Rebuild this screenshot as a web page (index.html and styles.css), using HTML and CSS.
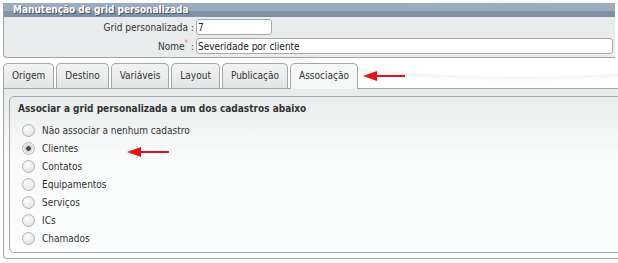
FILE: index.html
```html
<!DOCTYPE html>
<html lang="pt-BR">
<head>
  <meta charset="UTF-8" />
  <title>Manutenção de grid personalizada</title>
  <link rel="stylesheet" href="styles.css">
</head>
<body>
  <div class="panel">
    <div class="panel-title">Manutenção de grid personalizada</div>
    <div class="form">
      <div class="row">
        <label>Grid personalizada :</label>
        <input type="text" class="short" value="7" />
      </div>
      <div class="row">
        <label>Nome<span class="req">*</span> :</label>
        <input type="text" class="long" value="Severidade por cliente" />
      </div>
    </div>
  </div>

  <div class="tabs-area">
    <div class="tabs">
      <div class="tab">Origem</div>
      <div class="tab">Destino</div>
      <div class="tab">Variáveis</div>
      <div class="tab">Layout</div>
      <div class="tab">Publicação</div>
      <div class="tab active">Associação</div>
      <span class="arrow arrow-tab"></span>
    </div>
    <div class="tab-body">
      <div class="group">
        <div class="group-title">Associar a grid personalizada a um dos cadastros abaixo</div>
        <ul class="options">
          <li><span class="radio"></span>Não associar a nenhum cadastro</li>
          <li><span class="radio checked"></span>Clientes<span class="arrow arrow-opt"></span></li>
          <li><span class="radio"></span>Contatos</li>
          <li><span class="radio"></span>Equipamentos</li>
          <li><span class="radio"></span>Serviços</li>
          <li><span class="radio"></span>ICs</li>
          <li><span class="radio"></span>Chamados</li>
        </ul>
      </div>
    </div>
  </div>
</body>
</html>
```

FILE: styles.css
```css
body {
  margin: 0;
  padding: 3px 0 0 3px;
  width: 615px;
  height: 260px;
  overflow: hidden;
  background: #fff radial-gradient(ellipse 420px 60px at 520px 40px, #fff 60%, #f4f4f4 62%, #fff 70%);
  font-family: "DejaVu Sans Condensed", "DejaVu Sans", Verdana, sans-serif;
  font-stretch: condensed;
  font-size: 10px;
  color: #333;
}
.panel {
  width: 611px;
  border-left: 1px solid #a3a3a3;
  border-bottom: 1px solid #a3a3a3;
  border-bottom-left-radius: 4px;
  background: #e9ecec;
}
.panel-title {
  height: 14px;
  line-height: 14px;
  padding-left: 9px;
  background: linear-gradient(#9cadbd 0, #9aabbb 57%, #8293a8 58%, #7f90a4 100%);
  color: #fff;
  font-weight: bold;
  text-shadow: 1px 1px 0 #46566b;
}
.form {
  padding: 2px 0 3px;
}
.row {
  display: flex;
  align-items: center;
  margin-bottom: 3px;
}
.row:last-child {
  margin-bottom: 0;
}
.row label {
  width: 190px;
  text-align: right;
  margin-right: 2px;
}
.req {
  color: #f07c3c;
  font-size: 8px;
  vertical-align: top;
  position: relative;
  top: -2px;
}
.row input {
  box-sizing: border-box;
  height: 16px;
  padding: 0 1px;
  border: 1px solid #a8a8a8;
  border-radius: 3px;
  background: #fff;
  font: inherit;
  color: #222;
}
.short {
  width: 76px;
}
.long {
  width: 417px;
}
.tabs-area {
  margin-top: 5px;
  width: 640px;
}
.tabs {
  display: flex;
  align-items: flex-end;
  gap: 2px;
  height: 25px;
}
.tab {
  box-sizing: border-box;
  height: 25px;
  line-height: 24px;
  padding: 0 8px;
  border: 1px solid #a6a6a6;
  border-bottom: none;
  border-radius: 5px 5px 0 0;
  background: linear-gradient(#f2f3f3, #e3e6e6);
  white-space: nowrap;
}
.tab.active {
  background: #f5f6f6;
  height: 26px;
  margin-bottom: -1px;
  position: relative;
  z-index: 1;
}
.arrow {
  position: relative;
  display: inline-block;
  width: 42px;
  height: 10px;
}
.arrow::before {
  content: "";
  position: absolute;
  left: 0;
  top: 0;
  border-top: 5px solid transparent;
  border-bottom: 5px solid transparent;
  border-right: 14px solid #e8101a;
}
.arrow::after {
  content: "";
  position: absolute;
  left: 13px;
  right: 0;
  top: 4px;
  height: 2px;
  background: #e8101a;
}
.arrow-tab {
  align-self: center;
  margin-left: 3px;
}
.arrow-opt {
  position: absolute;
  left: 127px;
  top: 147px;
}
.tab-body {
  border-top: 1px solid #a6a6a6;
  border-left: 1px solid #a6a6a6;
  border-bottom: 1px solid #a6a6a6;
  border-bottom-left-radius: 4px;
  background: linear-gradient(#e8ebeb, #fafbfb 40%, #fbfcfc);
  padding: 7px 0 5px 5px;
}
.group {
  height: 155px;
  border: 1px solid #a6a6a6;
  border-radius: 5px;
  padding: 0 0 0 8px;
}
.group-title {
  font-weight: bold;
  margin-top: 5px;
  line-height: 14px;
}
.options {
  list-style: none;
  margin: 5px 0 0;
  padding: 0;
}
.options li {
  display: flex;
  align-items: center;
  height: 18px;
}
.radio {
  box-sizing: border-box;
  width: 13px;
  height: 13px;
  margin: 0 7px 0 4px;
  border: 1px solid #b4b4b4;
  border-radius: 50%;
  background: radial-gradient(circle at 40% 35%, #fdfdfd, #dcdcdc);
}
.radio.checked {
  background: radial-gradient(circle, #4a4a5a 0 2px, #c8c8c8 2.5px, #f0f0f0 5px);
}
```
